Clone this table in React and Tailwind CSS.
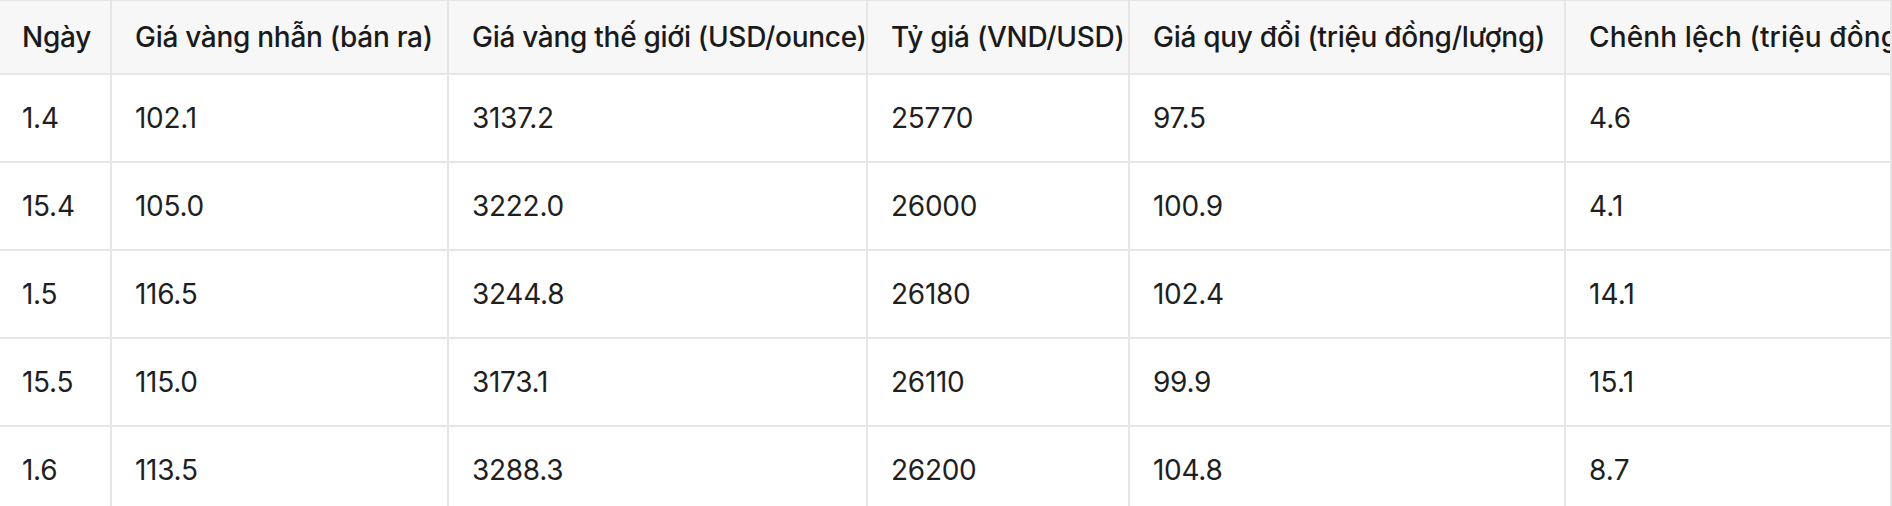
const columns = [
  { label: "Ngày", width: "w-[112px]", pad: "pl-[22px]" },
  { label: "Giá vàng nhẫn (bán ra)", width: "w-[337px]", pad: "pl-[23px]" },
  { label: "Giá vàng thế giới (USD/ounce)", width: "w-[419px]", pad: "pl-[23px]" },
  { label: "Tỷ giá (VND/USD)", width: "w-[262px]", pad: "pl-[23px]" },
  { label: "Giá quy đổi (triệu đồng/lượng)", width: "w-[436px]", pad: "pl-[23px]" },
  { label: "Chênh lệch (triệu đồng/lượng)", width: "w-[326px]", pad: "pl-[23px] tracking-[0.005em]" },
];

const rows = [
  ["1.4", "102.1", "3137.2", "25770", "97.5", "4.6"],
  ["15.4", "105.0", "3222.0", "26000", "100.9", "4.1"],
  ["1.5", "116.5", "3244.8", "26180", "102.4", "14.1"],
  ["15.5", "115.0", "3173.1", "26110", "99.9", "15.1"],
  ["1.6", "113.5", "3288.3", "26200", "104.8", "8.7"],
];

const App = () => {
  return (
    <div className="w-[1892px] h-[506px] overflow-hidden bg-white font-['Inter','Liberation_Sans',sans-serif] text-[28px] tracking-[-0.01em]">
      <div className="flex border-t border-[#e6e6e6] bg-[#f7f7f7]">
        {columns.map((c, i) => (
          <div
            key={i}
            className={`${c.width} ${c.pad} h-[74px] shrink-0 flex items-center overflow-hidden whitespace-nowrap border-b-2 border-r-2 border-[#e6e6e6] font-medium text-[#1a1a1a]`}
          >
            {c.label}
          </div>
        ))}
      </div>
      {rows.map((r, ri) => (
        <div key={ri} className="flex">
          {r.map((v, ci) => (
            <div
              key={ci}
              className={`${columns[ci].width} ${columns[ci].pad} h-[88px] shrink-0 flex items-center overflow-hidden whitespace-nowrap border-b-2 border-r-2 border-[#e6e6e6] text-[#1f1f1f]`}
            >
              {v}
            </div>
          ))}
        </div>
      ))}
    </div>
  );
};

export default App;
